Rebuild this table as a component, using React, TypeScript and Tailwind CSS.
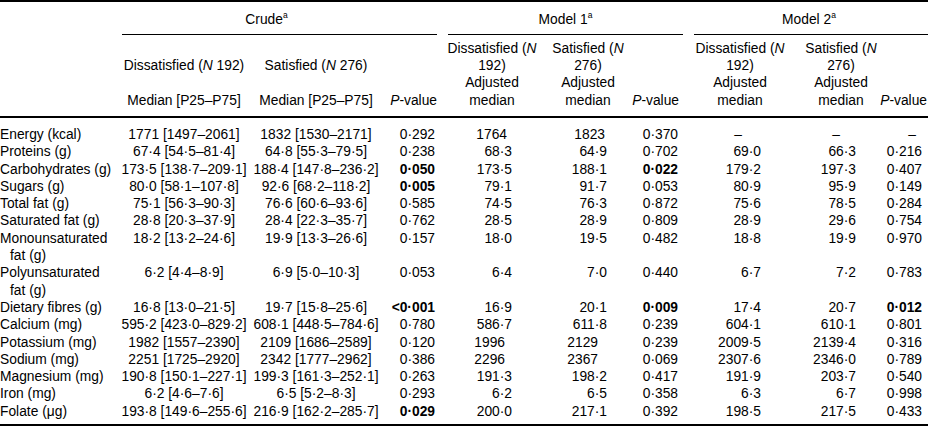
import type { ReactNode } from "react";

type Row = {
  label: string[];
  crude: [string, string, string];
  m1: [string, string, string];
  m2: [string, string, string];
  bold?: number[];
  energy?: boolean;
};

// bold indexes: 0 = crude P, 1 = model 1 P, 2 = model 2 P
const rows: Row[] = [
  {
    label: ["Energy (kcal)"],
    crude: ["1771 [1497–2061]", "1832 [1530–2171]", "0·292"],
    m1: ["1764", "1823", "0·370"],
    m2: ["–", "–", "–"],
    energy: true,
  },
  {
    label: ["Proteins (g)"],
    crude: ["67·4 [54·5–81·4]", "64·8 [55·3–79·5]", "0·238"],
    m1: ["68·3", "64·9", "0·702"],
    m2: ["69·0", "66·3", "0·216"],
  },
  {
    label: ["Carbohydrates (g)"],
    crude: ["173·5 [138·7–209·1]", "188·4 [147·8–236·2]", "0·050"],
    m1: ["173·5", "188·1", "0·022"],
    m2: ["179·2", "197·3", "0·407"],
    bold: [0, 1],
  },
  {
    label: ["Sugars (g)"],
    crude: ["80·0 [58·1–107·8]", "92·6 [68·2–118·2]", "0·005"],
    m1: ["79·1", "91·7", "0·053"],
    m2: ["80·9", "95·9", "0·149"],
    bold: [0],
  },
  {
    label: ["Total fat (g)"],
    crude: ["75·1 [56·3–90·3]", "76·6 [60·6–93·6]", "0·585"],
    m1: ["74·5", "76·3", "0·872"],
    m2: ["75·6", "78·5", "0·284"],
  },
  {
    label: ["Saturated fat (g)"],
    crude: ["28·8 [20·3–37·9]", "28·4 [22·3–35·7]", "0·762"],
    m1: ["28·5", "28·9", "0·809"],
    m2: ["28·9", "29·6", "0·754"],
  },
  {
    label: ["Monounsaturated", "fat (g)"],
    crude: ["18·2 [13·2–24·6]", "19·9 [13·3–26·6]", "0·157"],
    m1: ["18·0", "19·5", "0·482"],
    m2: ["18·8", "19·9", "0·970"],
  },
  {
    label: ["Polyunsaturated", "fat (g)"],
    crude: ["6·2 [4·4–8·9]", "6·9 [5·0–10·3]", "0·053"],
    m1: ["6·4", "7·0", "0·440"],
    m2: ["6·7", "7·2", "0·783"],
  },
  {
    label: ["Dietary fibres (g)"],
    crude: ["16·8 [13·0–21·5]", "19·7 [15·8–25·6]", "<0·001"],
    m1: ["16·9", "20·1", "0·009"],
    m2: ["17·4", "20·7", "0·012"],
    bold: [0, 1, 2],
  },
  {
    label: ["Calcium (mg)"],
    crude: ["595·2 [423·0–829·2]", "608·1 [448·5–784·6]", "0·780"],
    m1: ["586·7", "611·8", "0·239"],
    m2: ["604·1", "610·1", "0·801"],
  },
  {
    label: ["Potassium (mg)"],
    crude: ["1982 [1557–2390]", "2109 [1686–2589]", "0·120"],
    m1: ["1996", "2129", "0·239"],
    m2: ["2009·5", "2139·4", "0·316"],
  },
  {
    label: ["Sodium (mg)"],
    crude: ["2251 [1725–2920]", "2342 [1777–2962]", "0·386"],
    m1: ["2296", "2367", "0·069"],
    m2: ["2307·6", "2346·0", "0·789"],
  },
  {
    label: ["Magnesium (mg)"],
    crude: ["190·8 [150·1–227·1]", "199·3 [161·3–252·1]", "0·263"],
    m1: ["191·3", "198·2", "0·417"],
    m2: ["191·9", "203·7", "0·540"],
  },
  {
    label: ["Iron (mg)"],
    crude: ["6·2 [4·6–7·6]", "6·5 [5·2–8·3]", "0·293"],
    m1: ["6·2", "6·5", "0·358"],
    m2: ["6·3", "6·7", "0·998"],
  },
  {
    label: ["Folate (μg)"],
    crude: ["193·8 [149·6–255·6]", "216·9 [162·2–285·7]", "0·029"],
    m1: ["200·0", "217·1", "0·392"],
    m2: ["198·5", "217·5", "0·433"],
    bold: [0],
  },
];

const grid =
  "grid grid-cols-[122px_124px_140px_51px_11px_88px_104px_43px_11px_92px_98px_44px]";

function N() {
  return <i>N</i>;
}

function Sup() {
  return <sup className="text-[8.5px] top-[-0.75em]">a</sup>;
}

function Center({ children, className = "" }: { children: ReactNode; className?: string }) {
  return (
    <div className={`flex flex-col items-center whitespace-nowrap ${className}`}>{children}</div>
  );
}

function PValue({ className }: { className: string }) {
  return (
    <div className={`flex justify-end whitespace-nowrap ${className}`}>
      <span>
        <i>P</i>-value
      </span>
    </div>
  );
}

function Bold({ on, children }: { on: boolean; children: ReactNode }) {
  return on ? <span className="font-bold">{children}</span> : <>{children}</>;
}

function GroupHead({ n, name }: { n: string; name: string }) {
  return (
    <span>
      {name} (<N />
      {n ? ` ${n})` : ""}
    </span>
  );
}

function DataRow({ row }: { row: Row }) {
  const b = row.bold ?? [];
  const m1Int = !row.m1[0].includes("·");
  const m1Pad = row.energy ? "pr-[29px]" : m1Int ? "pr-[31px]" : "pr-[24px]";
  const m1SatPad = row.energy ? "pr-[35px]" : m1Int ? "pr-[42px]" : "pr-[33px]";
  const dash = row.m2[0] === "–";

  return (
    <div className={`${grid} items-start`}>
      <div className="whitespace-nowrap">
        {row.label.map((line, i) => (
          <div key={line} className={i > 0 ? "pl-[10px]" : ""}>
            {line}
          </div>
        ))}
      </div>
      <Center>{row.crude[0]}</Center>
      <Center>{row.crude[1]}</Center>
      <div className="text-right pr-[2px] whitespace-nowrap">
        <Bold on={b.includes(0)}>{row.crude[2]}</Bold>
      </div>
      <div />
      <div className={`text-right ${m1Pad}`}>{row.m1[0]}</div>
      <div className={`text-right ${m1SatPad}`}>{row.m1[1]}</div>
      <div className="text-right pr-[5px]">
        <Bold on={b.includes(1)}>{row.m1[2]}</Bold>
      </div>
      <div />
      <div className={dash ? "text-center pr-[4px]" : "text-right pr-[25px]"}>{row.m2[0]}</div>
      <div className={dash ? "text-center pl-[2px]" : "text-right pr-[28px]"}>{row.m2[1]}</div>
      <div className={dash ? "text-right pr-[12px]" : "text-right pr-[6px]"}>
        <Bold on={b.includes(2)}>{row.m2[2]}</Bold>
      </div>
    </div>
  );
}

export default function App() {
  return (
    <div className="w-[928px] h-[432px] bg-white text-black font-['Liberation_Sans',Arial,sans-serif] text-[13.8px] leading-[17.3px]">
      <div className="border-t-2 border-black" />

      <div className={`${grid} pt-[9px]`}>
        <div />
        <div className="col-span-3 border-b border-black pb-[6px] pr-[26px] text-center">
          Crude
          <Sup />
        </div>
        <div />
        <div className="col-span-3 border-b border-black pb-[6px] text-center">
          Model 1<Sup />
        </div>
        <div />
        <div className="col-span-3 border-b border-black pb-[6px] pr-[4px] text-center">
          Model 2<Sup />
        </div>
      </div>

      <div className="pt-[4.5px] pb-[7px] border-b-2 border-black">
        <div className={`${grid} items-end`}>
          <div />
          <Center>
            <GroupHead name="Dissatisfied" n="192" />
          </Center>
          <Center>
            <GroupHead name="Satisfied" n="276" />
          </Center>
          <div />
          <div />
          <Center>
            <GroupHead name="Dissatisfied" n="" />
            <span>192)</span>
          </Center>
          <Center>
            <GroupHead name="Satisfied" n="" />
            <span>276)</span>
          </Center>
          <div />
          <div />
          <Center>
            <GroupHead name="Dissatisfied" n="" />
            <span>192)</span>
          </Center>
          <Center className="pl-[12px]">
            <GroupHead name="Satisfied" n="" />
            <span>276)</span>
          </Center>
          <div />
        </div>
        <div className={`${grid} items-end`}>
          <div />
          <Center>Median [P25–P75]</Center>
          <Center>Median [P25–P75]</Center>
          <PValue className="pr-0" />
          <div />
          <Center>
            <span>Adjusted</span>
            <span>median</span>
          </Center>
          <Center>
            <span>Adjusted</span>
            <span>median</span>
          </Center>
          <PValue className="pr-[4px]" />
          <div />
          <Center>
            <span>Adjusted</span>
            <span>median</span>
          </Center>
          <Center className="pl-[12px]">
            <span>Adjusted</span>
            <span>median</span>
          </Center>
          <PValue className="pr-[1px]" />
        </div>
      </div>

      <div className="pt-[8px] pb-[4px] border-b-2 border-black">
        {rows.map((row) => (
          <DataRow key={row.label.join(" ")} row={row} />
        ))}
      </div>
    </div>
  );
}
